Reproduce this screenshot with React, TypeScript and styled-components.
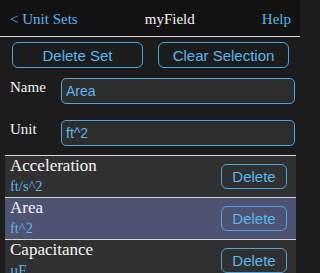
import React from "react";
import styled, { createGlobalStyle } from "styled-components";

const BLUE = "#5ab6ee";
const BORDER = "#4ca6dc";
const SERIF = `"Liberation Serif", "Times New Roman", serif`;
const SANS = `"Liberation Sans", Arial, sans-serif`;

const Global = createGlobalStyle`
  html, body { margin: 0; padding: 0; background: #1c1c1c; }
  body { width: 300px; height: 273px; overflow: hidden; }
  * { box-sizing: border-box; }
`;

const Page = styled.div`
  width: 300px;
  height: 273px;
  background: #1c1c1c;
  overflow: hidden;
  display: flex;
  flex-direction: column;
`;

const Header = styled.header`
  height: 37px;
  flex: none;
  background: #121212;
  border-bottom: 1px solid #d8d8d8;
  display: flex;
  align-items: center;
  justify-content: space-between;
  padding: 2px 9px 0 10px;
  font-family: ${SERIF};
  font-size: 15px;
`;

const NavLink = styled.span`
  color: ${BLUE};
`;

const Title = styled.span`
  color: #f4f4f4;
`;

const ButtonRow = styled.div`
  display: grid;
  grid-template-columns: 1fr 1fr;
  column-gap: 15px;
  padding: 5px 11px 0 12px;
`;

const OutlineButton = styled.button<{ $w?: number; $h?: number }>`
  height: ${(p) => p.$h ?? 26}px;
  ${(p) => (p.$w ? `width: ${p.$w}px;` : "")}
  padding: 0;
  border: 1px solid ${BORDER};
  border-radius: 6px;
  background: transparent;
  color: ${BLUE};
  font-family: ${SANS};
  font-size: 15px;
  line-height: 1;
  display: flex;
  align-items: center;
  justify-content: center;
  flex: none;
`;

const Form = styled.div`
  display: flex;
  flex-direction: column;
  gap: 16px;
  margin-top: 10px;
  padding: 0 5px 0 10px;
`;

const Field = styled.label`
  display: flex;
  align-items: flex-start;
`;

const FieldLabel = styled.span`
  width: 51px;
  flex: none;
  color: #f4f4f4;
  font-family: ${SERIF};
  font-size: 15px;
  line-height: 17px;
  padding-top: 1px;
`;

const Input = styled.input`
  flex: 1;
  min-width: 0;
  height: 26px;
  border: 1px solid ${BORDER};
  border-radius: 5px;
  background: #2d2d2d;
  color: ${BLUE};
  font-family: ${SANS};
  font-size: 14px;
  padding: 0 4px;
  outline: none;
`;

const List = styled.ul`
  list-style: none;
  margin: 9px 4px 0 5px;
  padding: 0;
  border-top: 1px solid #d8d8d8;
`;

const Row = styled.li<{ $selected?: boolean }>`
  display: flex;
  align-items: center;
  justify-content: space-between;
  padding: 0 9px 1px 5px;
  background: ${(p) => (p.$selected ? "#4f5373" : "#303030")};
  border-bottom: 1px solid #d8d8d8;
`;

const RowText = styled.div`
  display: flex;
  flex-direction: column;
  font-family: ${SERIF};
`;

const RowTitle = styled.span`
  color: #f6f6f6;
  font-size: 17px;
  line-height: 20px;
`;

const RowUnit = styled.span`
  color: ${BLUE};
  font-size: 14.5px;
  line-height: 20px;
`;

const units = [
  { name: "Acceleration", unit: "ft/s^2" },
  { name: "Area", unit: "ft^2", selected: true },
  { name: "Capacitance", unit: "µF" },
];

export default function App() {
  return (
    <Page>
      <Global />
      <Header>
        <NavLink>&lt; Unit Sets</NavLink>
        <Title>myField</Title>
        <NavLink>Help</NavLink>
      </Header>
      <ButtonRow>
        <OutlineButton>Delete Set</OutlineButton>
        <OutlineButton>Clear Selection</OutlineButton>
      </ButtonRow>
      <Form>
        <Field>
          <FieldLabel>Name</FieldLabel>
          <Input defaultValue="Area" />
        </Field>
        <Field>
          <FieldLabel>Unit</FieldLabel>
          <Input defaultValue="ft^2" />
        </Field>
      </Form>
      <List>
        {units.map((u) => (
          <Row key={u.name} $selected={u.selected}>
            <RowText>
              <RowTitle>{u.name}</RowTitle>
              <RowUnit>{u.unit}</RowUnit>
            </RowText>
            <OutlineButton $w={66} $h={25}>
              Delete
            </OutlineButton>
          </Row>
        ))}
      </List>
    </Page>
  );
}
